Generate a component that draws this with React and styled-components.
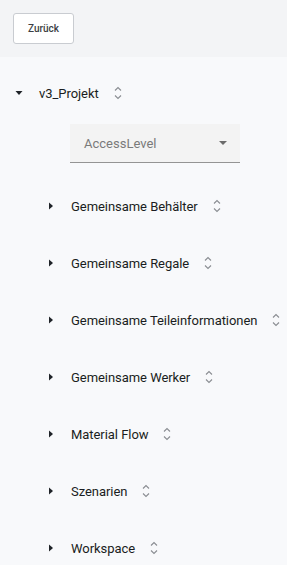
import React from "react";
import styled, { createGlobalStyle } from "styled-components";

const GlobalStyle = createGlobalStyle`
  body {
    margin: 0;
    background: #f8f9fb;
    font-family: Roboto, "Liberation Sans", sans-serif;
  }
`;

const children = [
  "Gemeinsame Behälter",
  "Gemeinsame Regale",
  "Gemeinsame Teileinformationen",
  "Gemeinsame Werker",
  "Material Flow",
  "Szenarien",
  "Workspace",
];

const SortIcon = () => (
  <SortSvg width="8" height="16" viewBox="0 0 8 16">
    <path d="M1 5.5 L4 2.5 L7 5.5" />
    <path d="M1 10.5 L4 13.5 L7 10.5" />
  </SortSvg>
);

const Caret = ({ open }) => (
  <CaretSvg width="8" height="8" viewBox="0 0 8 8">
    {open ? <path d="M0.5 2 L7.5 2 L4 6 Z" /> : <path d="M2 0.5 L6 4 L2 7.5 Z" />}
  </CaretSvg>
);

const App = () => {
  return (
    <>
      <GlobalStyle />
      <Header>
        <BackBtn>Zurück</BackBtn>
      </Header>
      <Tree>
        <Row $indent={15}>
          <Caret open />
          <Label>v3_Projekt</Label>
          <SortIcon />
        </Row>
        <Select>
          <span>AccessLevel</span>
          <SelectArrow />
        </Select>
        <ChildList>
          {children.map((c) => (
            <Row key={c} $indent={47}>
              <Caret />
              <Label>{c}</Label>
              <SortIcon />
            </Row>
          ))}
        </ChildList>
      </Tree>
    </>
  );
};

export default App;

const Header = styled.div`
  height: 57px;
  box-sizing: border-box;
  padding: 13px;
  background: #f3f4f6;
`;

const BackBtn = styled.button`
  width: 61px;
  height: 31px;
  background: #fff;
  border: 1px solid #c9ccd1;
  border-radius: 3px;
  font-family: Roboto, "Liberation Sans", sans-serif;
  font-size: 10px;
  font-weight: 500;
  color: #3c3f44;
  padding: 0;
  cursor: pointer;
`;

const Tree = styled.div`
  display: flex;
  flex-direction: column;
  padding-top: 16px;
`;

const Row = styled.div`
  display: flex;
  align-items: center;
  height: 40px;
  padding-left: ${(p) => p.$indent}px;
`;

const CaretSvg = styled.svg`
  fill: #1f2328;
  flex: none;
`;

const Label = styled.span`
  font-size: 13px;
  letter-spacing: -0.05px;
  color: #1a1d21;
  margin-left: 16px;
  white-space: nowrap;
`;

const SortSvg = styled.svg`
  fill: none;
  stroke: #8a8d92;
  stroke-width: 1.1;
  margin-left: 15px;
  flex: none;
`;

const Select = styled.div`
  margin: 11px 0 0 70px;
  width: 170px;
  height: 39px;
  box-sizing: border-box;
  background: #f3f3f3;
  border-bottom: 1px solid #949494;
  display: flex;
  align-items: center;
  justify-content: space-between;
  padding: 0 13px 0 14px;
  font-size: 13px;
  color: #7a7a7a;
`;

const SelectArrow = styled.div`
  width: 0;
  height: 0;
  border-left: 4px solid transparent;
  border-right: 4px solid transparent;
  border-top: 4px solid #6b6b6b;
`;

const ChildList = styled.div`
  display: flex;
  flex-direction: column;
  gap: 17px;
  margin-top: 23px;
`;
